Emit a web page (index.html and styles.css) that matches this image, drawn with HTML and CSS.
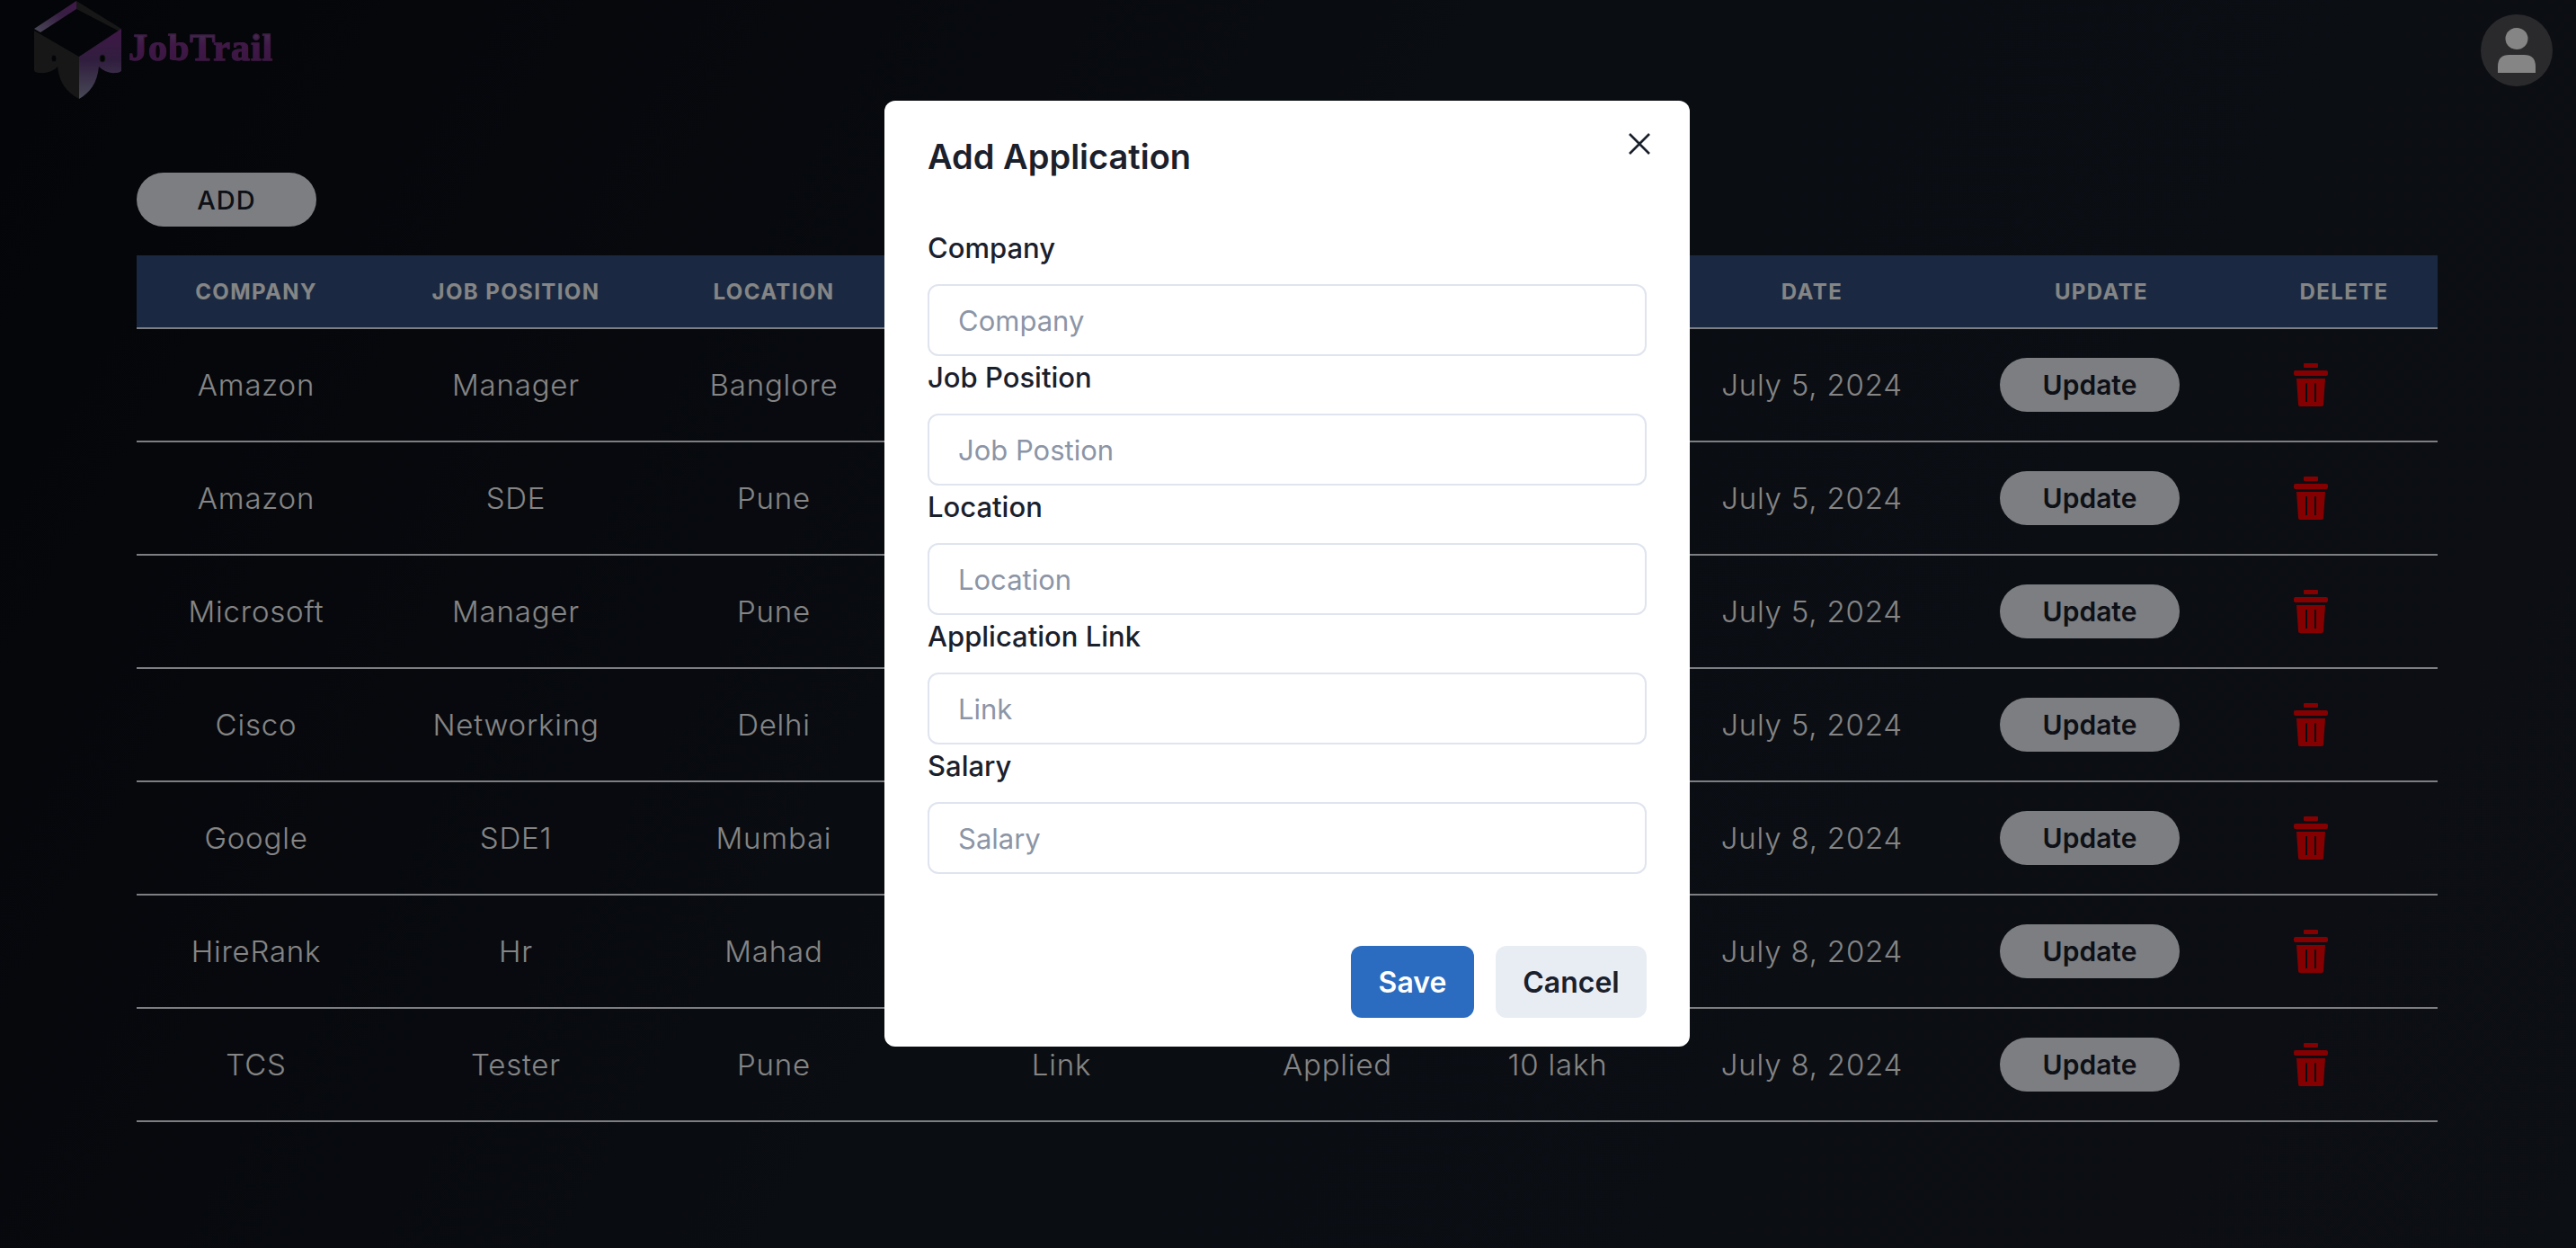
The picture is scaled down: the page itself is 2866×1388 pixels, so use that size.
FILE: index.html
```html
<!DOCTYPE html>
<html lang="en">
<head>
  <meta charset="UTF-8">
  <title>JobTrail</title>
  <link rel="stylesheet" href="styles.css">
</head>
<body>
  <header class="topbar">
    <a class="brand" href="#">
      <svg class="brand-logo" viewBox="0 0 100 110" width="100" height="110">
        <defs>
          <linearGradient id="rimLeft" x1="0" y1="1" x2="1" y2="0">
            <stop offset="0" stop-color="#8c8ca8"/>
            <stop offset="0.6" stop-color="#6a3a80"/>
            <stop offset="1" stop-color="#7c2f8c"/>
          </linearGradient>
          <linearGradient id="sideRight" x1="0" y1="0" x2="0" y2="1">
            <stop offset="0" stop-color="#7a2c88"/>
            <stop offset="0.45" stop-color="#5e3a78"/>
            <stop offset="1" stop-color="#8a8ca6"/>
          </linearGradient>
        </defs>
        <path fill="url(#rimLeft)" d="M1 32 48 1V10L8 36Z"/>
        <path fill="#2c2c2c" d="M48 1 98 32V36L48 10Z"/>
        <path fill="#2c2c2c" d="M1 34 51 63V110C38 103 29 93 27 74 24 78 16 82 7 81 4 81 1 80 1 78Z"/>
        <path fill="url(#sideRight)" d="M98 32V78C98 80 95 81 92 81 84 82 77 78 73 74 71 93 63 103 51 110V63Z"/>
        <ellipse class="logo-hole" cx="23" cy="65" rx="3" ry="4"/>
        <ellipse class="logo-hole" cx="77" cy="65" rx="3" ry="4"/>
      </svg>
      <span class="brand-name">JobTrail</span>
    </a>
    <button class="avatar">
      <svg viewBox="0 0 80 80" width="80" height="80">
        <ellipse cx="40" cy="27" rx="12.5" ry="12"/>
        <path d="M19 65V58Q19 45 32 45H48Q61 45 61 58V65Z"/>
      </svg>
    </button>
  </header>

  <main class="content">
    <button class="pill add-btn">ADD</button>
    <table class="jobs">
      <thead>
        <tr>
          <th class="c-company">Company</th>
          <th class="c-position">Job Position</th>
          <th class="c-location">Location</th>
          <th class="c-link"></th>
          <th class="c-status"></th>
          <th class="c-salary"></th>
          <th class="c-date">Date</th>
          <th class="c-update">Update</th>
          <th class="c-delete">Delete</th>
        </tr>
      </thead>
      <tbody id="rows"></tbody>
    </table>
  </main>

  <div class="overlay"></div>

  <div class="modal-wrap">
    <section class="modal">
      <h2 class="modal-title">Add Application</h2>
      <button class="modal-close">
        <svg viewBox="0 0 24 24" width="24" height="24">
          <path d="M1 1 23 23M23 1 1 23"/>
        </svg>
      </button>
      <form class="modal-body">
        <label class="field-label" for="company">Company</label>
        <input class="field-input" id="company" placeholder="Company">
        <label class="field-label" for="position">Job Position</label>
        <input class="field-input" id="position" placeholder="Job Postion">
        <label class="field-label" for="location">Location</label>
        <input class="field-input" id="location" placeholder="Location">
        <label class="field-label" for="link">Application Link</label>
        <input class="field-input" id="link" placeholder="Link">
        <label class="field-label" for="salary">Salary</label>
        <input class="field-input" id="salary" placeholder="Salary">
      </form>
      <footer class="modal-footer">
        <button class="btn btn-save">Save</button>
        <button class="btn btn-cancel">Cancel</button>
      </footer>
    </section>
  </div>

  <script>
    // link, status and salary only show on the last row, the modal covers the rest
    const jobs = [
      ['Amazon', 'Manager', 'Banglore', '', '', '', 'July 5, 2024'],
      ['Amazon', 'SDE', 'Pune', '', '', '', 'July 5, 2024'],
      ['Microsoft', 'Manager', 'Pune', '', '', '', 'July 5, 2024'],
      ['Cisco', 'Networking', 'Delhi', '', '', '', 'July 5, 2024'],
      ['Google', 'SDE1', 'Mumbai', '', '', '', 'July 8, 2024'],
      ['HireRank', 'Hr', 'Mahad', '', '', '', 'July 8, 2024'],
      ['TCS', 'Tester', 'Pune', 'Link', 'Applied', '10 lakh', 'July 8, 2024']
    ];
    const trash = '<svg class="trash" viewBox="0 0 38 48" width="38" height="48">' +
      '<rect x="11" y="0" width="16" height="5" rx="1"/><rect x="0" y="8" width="38" height="6" rx="2"/>' +
      '<path fill-rule="evenodd" d="M3 17H35L33 46Q33 48 31 48H7Q5 48 5 46ZM13 22V43H15V22ZM23 22V43H25V22Z"/></svg>';

    document.getElementById('rows').innerHTML = jobs.map(job => `
      <tr>
        ${job.map(text => `<td>${text}</td>`).join('')}
        <td class="cell-update"><button class="pill update-btn">Update</button></td>
        <td class="cell-delete">${trash}</td>
      </tr>`).join('');
  </script>
</body>
</html>
```

FILE: styles.css
```css
* {
  box-sizing: border-box;
}

body {
  margin: 0;
  min-height: 1388px;
  overflow: hidden;
  background: linear-gradient(120deg, #070a10 0%, #141923 45%, #181d28 100%);
  color: #fff;
  font-family: Inter, "Liberation Sans", sans-serif;
}

button {
  font-family: inherit;
  border: none;
  cursor: pointer;
}

.topbar {
  display: flex;
  justify-content: space-between;
  align-items: flex-start;
  height: 110px;
  padding-left: 37px;
  padding-right: 26px;
}

.brand {
  display: flex;
  align-items: flex-start;
  gap: 6px;
  text-decoration: none;
}

.brand-logo {
  display: block;
}

.logo-hole {
  fill: #080b13;
  stroke: #2c2c2c;
  stroke-width: 1;
}

.brand-name {
  margin-top: 30px;
  font-family: "Liberation Serif", serif;
  font-weight: 700;
  font-size: 42px;
  line-height: 46px;
  letter-spacing: 1px;
  background: linear-gradient(180deg, #84689c 0%, #7c2f8c 45%, #6a2a78 100%);
  -webkit-background-clip: text;
  background-clip: text;
  color: transparent;
  -webkit-text-stroke: 1px #74307f;
}

.avatar {
  width: 80px;
  height: 80px;
  margin-top: 16px;
  padding: 0;
  border-radius: 50%;
  background: #515155;
}

.avatar svg {
  display: block;
  fill: #fff;
}

.content {
  padding: 82px 154px 0 152px;
}

.pill {
  display: block;
  height: 60px;
  border-radius: 30px;
  background: #edf2f7;
  color: #1a202c;
}

.add-btn {
  width: 200px;
  margin-bottom: 32px;
  font-size: 29px;
  font-weight: 500;
  letter-spacing: 1px;
}

.update-btn {
  width: 200px;
  font-size: 30px;
  font-weight: 600;
}

.jobs {
  width: 2560px;
  table-layout: fixed;
  border-collapse: separate;
  border-spacing: 0;
}

.jobs th {
  height: 82px;
  padding: 0;
  background: #32507e;
  border-bottom: 2px solid #edf2f7;
  color: #fff;
  font-size: 24px;
  font-weight: 700;
  letter-spacing: 1.4px;
  text-transform: uppercase;
  text-align: center;
}

.jobs td {
  height: 126px;
  padding: 0;
  border-bottom: 2px solid #edf2f7;
  font-size: 33px;
  font-weight: 300;
  letter-spacing: 0.8px;
  text-align: center;
  vertical-align: middle;
}

.c-company { width: 266px; }
.c-position { width: 312px; }
.c-location { width: 262px; }
.c-link { width: 378px; }
.c-status { width: 236px; }
.c-salary { width: 254px; }
.c-date { width: 312px; }
.c-update { width: 332px; }
.c-delete { width: 208px; }

.jobs td.cell-update {
  padding-left: 53px;
  text-align: left;
}

.jobs td.cell-delete {
  padding-left: 48px;
  text-align: left;
}

.trash {
  display: block;
  fill: #ff0000;
}

.overlay {
  position: fixed;
  inset: 0;
  background: rgba(0, 0, 0, 0.48);
}

.modal-wrap {
  position: fixed;
  inset: 0;
  display: flex;
  justify-content: center;
  align-items: flex-start;
  padding-top: 112px;
  padding-right: 2px;
}

.modal {
  position: relative;
  width: 896px;
  background: #fff;
  border-radius: 12px;
  color: #1a202c;
}

.modal-title {
  margin: 0;
  padding: 32px 48px;
  font-size: 38px;
  font-weight: 600;
  line-height: 60px;
}

.modal-close {
  position: absolute;
  top: 36px;
  right: 44px;
  width: 24px;
  height: 24px;
  padding: 0;
  background: none;
}

.modal-close svg {
  display: block;
  stroke: #1a202c;
  stroke-width: 2.6;
  fill: none;
}

.modal-body {
  display: flex;
  flex-direction: column;
  padding: 16px 48px 48px;
}

.field-label {
  margin-bottom: 16px;
  font-size: 31px;
  font-weight: 500;
  line-height: 48px;
}

.field-input {
  width: 100%;
  height: 80px;
  padding: 0 32px;
  border: 2px solid #dfe4ee;
  border-radius: 12px;
  background: #fff;
  color: #1a202c;
  font-family: inherit;
  font-size: 31px;
}

.field-input::placeholder {
  color: #8c95a6;
  opacity: 1;
}

.modal-footer {
  display: flex;
  justify-content: flex-end;
  gap: 24px;
  padding: 32px 48px;
}

.btn {
  height: 80px;
  border-radius: 12px;
  font-size: 32px;
  font-weight: 600;
}

.btn-save {
  width: 137px;
  background: #2b6cc0;
  color: #fff;
}

.btn-cancel {
  width: 168px;
  background: #e8edf4;
  color: #1a202c;
}
```
